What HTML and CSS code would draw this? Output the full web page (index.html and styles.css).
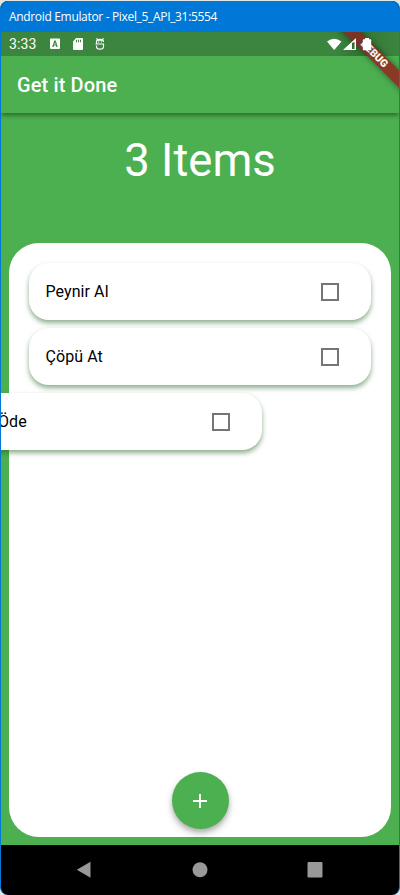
FILE: index.html
```html
<!DOCTYPE html>
<html lang="en">
<head>
<meta charset="utf-8">
<title>Get it Done</title>
<link rel="stylesheet" href="styles.css">
</head>
<body>
<div class="window">
  <header class="titlebar"><span>Android Emulator - Pixel_5_API_31:5554</span></header>
  <main class="screen">
    <div class="statusbar">
      <span class="clock">3:33</span>
      <svg class="status-left" width="56" height="12" viewBox="0 0 56 12">
        <path fill="#fff" fill-rule="evenodd" d="M1 .5h8q1 0 1 1v8.500q0 1-1 1H1q-1 0-1-1V1.500q0-1 1-1zM4.300 2.500 2.200 9h1.400l.4-1.400h2L6.400 9h1.400L5.700 2.500zM5 4.200l.7 2.300H4.300z"/>
        <path fill="#fff" fill-rule="evenodd" d="M26 0h6q1 0 1 1v10q0 1-1 1h-8q-1 0-1-1V3.500zM26 1.800v2.400h1V1.800zm2 0v2.400h1V1.800zm2 0v2.400h1V1.800z"/>
        <path fill="none" stroke="#fff" stroke-width="1.200" d="M46.500 6V4q0-2.700 3.500-2.700t3.500 2.700M46.500 .3l1.300 1.500M53.500 .3l-1.300 1.500M45.500 6h8V8.500q0 2.700-3.500 2.700t-3.500-2.700V7.500"/>
        <path fill="#fff" d="M47.500 1.500h5v1.200h-5zM48 3.400h1.200v1H48zm2.800 0H52v1h-1.200z"/>
      </svg>
    </div>
    <div class="appbar"><h1>Get it Done</h1></div>
    <div class="debug-corner"><div class="debug-ribbon">DEBUG</div></div>
    <div class="status-shade"></div>
    <svg class="status-right" width="46" height="14" viewBox="0 0 46 14">
      <path fill="#fff" d="M0 3.500Q7-2 14.500 3.500L7.200 12z"/>
      <path fill="#fff" fill-rule="evenodd" d="M16 12 29 0v12zM25 5v6h2.500V4z"/>
      <path fill="#fff" d="M38 0h4v1.300H43.500q.7 0 .7.700v9.500q0 .7-.7.700h-7q-.7 0-.7-.7V2q0-.7.7-.7H38z"/>
    </svg>
    <section class="summary">3 Items</section>
    <section class="panel">
      <ul class="list">
        <li class="card"><span>Peynir Al</span><i class="checkbox"></i></li>
        <li class="card"><span>Çöpü At</span><i class="checkbox"></i></li>
        <li class="card dismissing"><span class="clipped">Öde</span><i class="checkbox"></i></li>
      </ul>
      <button class="fab" aria-label="Add"><svg width="14" height="14" viewBox="0 0 14 14"><path fill="#fff" d="M6 0h2v6h6v2H8v6H6V8H0V6h6z"/></svg></button>
    </section>
  </main>
  <nav class="navbar">
    <svg width="16" height="18" viewBox="0 0 16 18"><path fill="#999" d="M14.500.8v16L.8 8.800z"/></svg>
    <svg width="16" height="18" viewBox="0 0 16 18"><circle cx="8" cy="8.700" r="7.500" fill="#999"/></svg>
    <svg width="16" height="18" viewBox="0 0 16 18"><rect x=".5" y="1" width="15" height="15.500" rx="1" fill="#999"/></svg>
  </nav>
</div>
</body>
</html>
```
FILE: styles.css
```css
* { box-sizing: border-box; }
body {
  margin: 0;
  height: 895px;
  padding-top: 1px;
  overflow: hidden;
  background: #e3e5e3;
  font-family: Roboto, sans-serif;
}
.window {
  height: 894px;
  border: 1px solid #0078d7;
  border-top: 0;
  border-bottom: 0;
  border-radius: 8px;
  overflow: hidden;
  display: flex;
  flex-direction: column;
  background: #000;
}
.titlebar {
  height: 31px;
  flex: none;
  padding-left: 8px;
  line-height: 31px;
  background: #0078d7;
  color: #fff;
  font-family: "Open Sans", sans-serif;
  font-size: 12px;
  letter-spacing: -0.33px;
  white-space: nowrap;
}
.screen {
  position: relative;
  height: 813px;
  flex: none;
  background: #4caf50;
  display: flex;
  flex-direction: column;
  overflow: hidden;
}
.statusbar {
  height: 24px;
  flex: none;
  background: #3b853e;
  display: flex;
  align-items: center;
  padding-left: 8px;
  color: #fff;
}
.clock { font-size: 14px; letter-spacing: 0.1px; width: 41px; line-height: 24px; }
.appbar {
  height: 57px;
  flex: none;
  padding-left: 16px;
  display: flex;
  align-items: center;
  color: #fff;
  box-shadow: 0 2px 5px rgba(0, 0, 0, 0.45);
  clip-path: inset(0 0 -10px 0);
}
.appbar h1 { margin: 1px 0 0; font-size: 20px; font-weight: 500; letter-spacing: 0.12px; }
.debug-corner {
  position: absolute;
  top: 0;
  right: 0;
  width: 80px;
  height: 80px;
  overflow: hidden;
}
.debug-ribbon {
  position: absolute;
  left: -5px;
  top: 16px;
  width: 120px;
  height: 12px;
  line-height: 12px;
  text-align: center;
  background: #883a27;
  color: #fff;
  font-size: 10.500px;
  font-weight: 900;
  transform: rotate(45deg);
  box-shadow: 0 0 6px rgba(0, 0, 0, 0.5);
}
.status-shade {
  position: absolute;
  top: 0;
  right: 0;
  width: 80px;
  height: 24px;
  background: linear-gradient(90deg, rgba(0, 0, 0, 0) 20%, rgba(0, 0, 0, 0.12) 45%, rgba(0, 0, 0, 0));
}
.status-right { position: absolute; left: 326px; top: 6px; }
.summary {
  height: 130px;
  flex: none;
  padding-top: 21px;
  color: #fff;
  font-size: 45.500px;
  line-height: 54px;
  text-align: center;
}
.panel {
  height: 594px;
  flex: none;
  margin: 0 8px;
  padding: 20px 20px 8px;
  border-radius: 30px;
  background: #fff;
  display: flex;
  flex-direction: column;
  align-items: center;
  justify-content: space-between;
}
.list {
  width: 342px;
  margin: 0;
  padding: 0;
  list-style: none;
  display: grid;
  gap: 8px;
}
.card {
  height: 57px;
  padding: 0 32px 0 16.500px;
  border-radius: 20px;
  background: #fff;
  box-shadow: 0 3px 5px rgba(27, 94, 32, 0.5);
  display: flex;
  align-items: center;
  justify-content: space-between;
  font-size: 16px;
  letter-spacing: 0.08px;
  color: #000;
}
.dismissing { transform: translateX(-109px); }
.clipped { margin-left: 61.500px; }
.checkbox { width: 18px; height: 18px; border: 2px solid #757575; }
.fab {
  width: 57px;
  height: 57px;
  padding: 0;
  border: 0;
  border-radius: 50%;
  background: #4caf50;
  box-shadow: 0 3px 5px rgba(0, 0, 0, 0.22), 0 5px 9px rgba(0, 0, 0, 0.14);
  display: flex;
  align-items: center;
  justify-content: center;
}
.navbar {
  height: 50px;
  display: flex;
  justify-content: space-between;
  align-items: center;
  padding: 0 76px 0 75px;
}
```
